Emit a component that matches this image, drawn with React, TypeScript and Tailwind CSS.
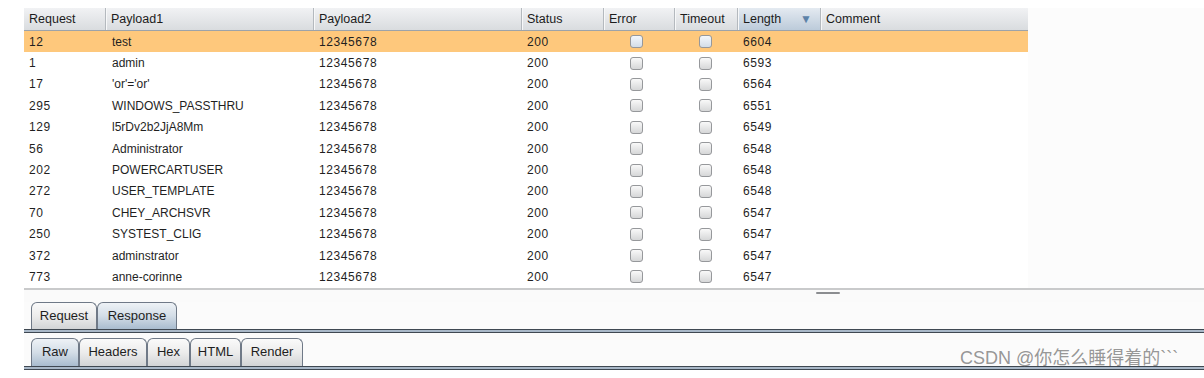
import React from "react";

const cols = [
  { key: "req", label: "Request", w: "w-[81px]" },
  { key: "p1", label: "Payload1", w: "w-[208px]" },
  { key: "p2", label: "Payload2", w: "w-[208px]" },
  { key: "status", label: "Status", w: "w-[82px]" },
  { key: "error", label: "Error", w: "w-[71px]" },
  { key: "timeout", label: "Timeout", w: "w-[63px]" },
  { key: "len", label: "Length", w: "w-[83px]" },
  { key: "comment", label: "Comment", w: "w-[208px]" },
];

const rows = [
  ["12", "test", "6604"],
  ["1", "admin", "6593"],
  ["17", "'or'='or'", "6564"],
  ["295", "WINDOWS_PASSTHRU", "6551"],
  ["129", "l5rDv2b2JjA8Mm", "6549"],
  ["56", "Administrator", "6548"],
  ["202", "POWERCARTUSER", "6548"],
  ["272", "USER_TEMPLATE", "6548"],
  ["70", "CHEY_ARCHSVR", "6547"],
  ["250", "SYSTEST_CLIG", "6547"],
  ["372", "adminstrator", "6547"],
  ["773", "anne-corinne", "6547"],
];

function Check({ on }: { on: boolean }) {
  return (
    <div
      className={`w-[13px] h-[13px] rounded-[3px] border-[1.5px] border-[#96989b] ${
        on ? "bg-gradient-to-b from-[#f4f8fc] to-[#d3dde8]" : "bg-gradient-to-b from-[#f9f9f9] to-[#d6d7d8]"
      }`}
    />
  );
}

function Tab({ label, active, w }: { label: string; active?: boolean; w: string }) {
  return (
    <div
      className={`${w} h-full flex items-center justify-center rounded-t-[6px] border border-b-0 border-[#6f7987] text-[13px] text-[#1e1e1e] ${
        active
          ? "bg-gradient-to-b from-[#eef2f6] via-[#d3dde7] to-[#a9bccf]"
          : "bg-gradient-to-b from-[#fafafa] via-[#ececec] to-[#d2d4d6]"
      }`}
    >
      {label}
    </div>
  );
}

function Rule() {
  return <div className="h-[4px] border-y border-[#3f4852] bg-[#a9b8c8]" />;
}

export default function App() {
  return (
    <div
      className="relative w-[1204px] h-[378px] bg-white overflow-hidden text-[#1f1f1f]"
      style={{ fontFamily: '"Liberation Sans", Arial, "Noto Sans CJK SC", sans-serif' }}
    >
      <div className="h-[8px]" />
      <div className="flex">
        <div className="w-[24px] shrink-0" />
        <div className="w-[1004px] shrink-0">
          {/* header */}
          <div className="flex h-[23px] border-b border-[#9da3a9] bg-gradient-to-b from-[#f1f2f4] to-[#d9dcdf]">
            {cols.map((c, i) => (
              <div
                key={c.key}
                className={`${c.w} shrink-0 h-full flex items-center pl-[5px] pr-[8px] text-[12.5px] text-[#1c1c1c] ${
                  i > 0 ? "border-l border-[#b4b9be] shadow-[inset_1px_0_0_#f7f8f9]" : ""
                } ${c.key === "len" ? "bg-gradient-to-b from-[#e4eaf1] to-[#bccbda] justify-between" : ""}`}
              >
                <span>{c.label}</span>
                {c.key === "len" && <span className="text-[12px] text-[#5d82a8]">▼</span>}
              </div>
            ))}
          </div>
          {/* rows */}
          {rows.map((r, i) => (
            <div
              key={r[0]}
              className={`flex h-[21.4px] items-center text-[12px] ${i === 0 ? "bg-[#fec87c]" : ""}`}
            >
              <div className="w-[81px] shrink-0 pl-[5px] tracking-[0.6px]">{r[0]}</div>
              <div className="w-[208px] shrink-0 pl-[7px]">{r[1]}</div>
              <div className="w-[208px] shrink-0 pl-[6px] tracking-[0.6px]">12345678</div>
              <div className="w-[82px] shrink-0 pl-[6px] tracking-[0.6px]">200</div>
              <div className="w-[71px] shrink-0 flex justify-center pr-[4px]">
                <Check on={i === 0} />
              </div>
              <div className="w-[63px] shrink-0 flex justify-center">
                <Check on={i === 0} />
              </div>
              <div className="w-[83px] shrink-0 pl-[6px] tracking-[0.6px]">{r[2]}</div>
              <div className="w-[208px] shrink-0" />
            </div>
          ))}
        </div>
        <div className="flex-1 bg-[#fcfcfc]" />
      </div>

      {/* splitter */}
      <div className="ml-[24px] h-[2px] bg-[#c9cacb]" />
      <div className="ml-[24px] h-[12px] bg-[#fafafa] flex">
        <div className="w-[792px]" />
        <div className="mt-[2px] w-[24px] h-[2px] rounded-full bg-[#8b8d90]" />
      </div>

      {/* Request / Response tabs */}
      <div className="ml-[24px] bg-[#fbfbfb]">
        <div className="flex h-[27px] pl-[7px]">
          <Tab label="Request" w="w-[66px]" />
          <Tab label="Response" active w="w-[80px]" />
        </div>
        <Rule />
        <div className="h-[5px]" />
        <div className="flex h-[28px] pl-[7px]">
          <Tab label="Raw" active w="w-[48px]" />
          <Tab label="Headers" w="w-[68px]" />
          <Tab label="Hex" w="w-[43px]" />
          <Tab label="HTML" w="w-[51px]" />
          <Tab label="Render" w="w-[62px]" />
        </div>
        <Rule />
      </div>

      <div className="absolute left-[960px] top-[347px] text-[18px] leading-[22px] text-[#8a8a8a]/90 whitespace-nowrap">
        CSDN @你怎么睡得着的```
      </div>
    </div>
  );
}
